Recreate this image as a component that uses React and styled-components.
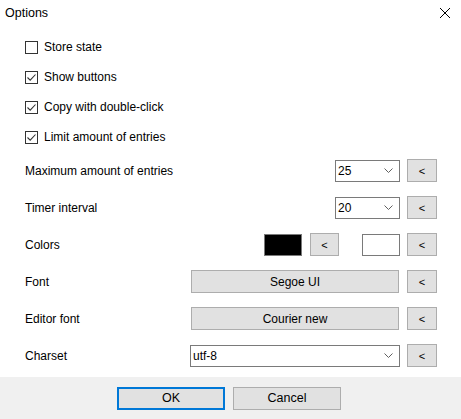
import React from 'react';
import styled, { createGlobalStyle } from 'styled-components';

const GlobalStyle = createGlobalStyle`
  html, body {
    margin: 0;
    padding: 0;
    background: #ffffff;
  }
  body {
    font-family: "Liberation Sans", Arial, sans-serif;
    font-size: 12px;
    color: #000;
  }
`

const Dialog = styled.div`
  width: 461px;
  height: 419px;
  display: flex;
  flex-direction: column;
  background: #ffffff;
  overflow: hidden;
`
const TitleBar = styled.div`
  height: 26px;
  display: flex;
  align-items: center;
  justify-content: space-between;
  padding: 0 11px 0 5px;
  font-size: 12.5px;
`
const CloseButton = styled.div`
  width: 10px;
  height: 10px;
  display: flex;
`
const Content = styled.div`
  flex: 1;
  display: flex;
  flex-direction: column;
  padding: 6px 24px 0 25px;
`
const CheckRow = styled.label`
  height: 30px;
  display: flex;
  align-items: center;
  gap: 6px;
`
const Box = styled.span`
  width: 11px;
  height: 11px;
  border: 1px solid #333;
  background: #fff;
  display: flex;
  align-items: center;
  justify-content: center;
`
const FieldRow = styled.div`
  height: 37px;
  display: flex;
  align-items: center;
  justify-content: space-between;
`
const Controls = styled.div`
  display: flex;
  align-items: center;
  gap: ${props => props.gap || '7px'};
`
const Select = styled.div`
  box-sizing: border-box;
  width: ${props => props.width};
  height: 22px;
  border: 1px solid #7a7a7a;
  background: #fff;
  display: flex;
  align-items: center;
  justify-content: space-between;
  padding: 0 6px 0 2px;
`
const Button = styled.div`
  box-sizing: border-box;
  width: ${props => props.width || '30px'};
  height: 23px;
  background: #e1e1e1;
  border: 1px solid #adadad;
  display: flex;
  align-items: center;
  justify-content: center;
  font-size: ${props => props.small ? '11px' : '12px'};
`
const Swatch = styled.div`
  box-sizing: border-box;
  width: 38px;
  height: 22px;
  border: 1px solid #7a7a7a;
  background: ${props => props.color};
`
const Footer = styled.div`
  height: 42px;
  background: #f0f0f0;
  display: flex;
  align-items: center;
  justify-content: center;
  gap: 8px;
  padding-right: 3px;
`
const DialogButton = styled.div`
  box-sizing: border-box;
  width: 108px;
  height: 23px;
  background: #e1e1e1;
  border: ${props => props.primary ? '2px solid #0078d7' : '1px solid #adadad'};
  display: flex;
  align-items: center;
  justify-content: center;
  font-size: 12.5px;
`

const Chevron = () => (
  <svg width="9" height="5" viewBox="0 0 9 5">
    <path d="M0.5 0.5 L4.5 4.5 L8.5 0.5" fill="none" stroke="#606060" strokeWidth="1" />
  </svg>
)

const Check = () => (
  <svg width="11" height="11" viewBox="0 0 11 11">
    <path d="M1.5 5.5 L4.2 8.2 L9.5 2.5" fill="none" stroke="#333" strokeWidth="1.1" />
  </svg>
)

const Checkbox = ({ checked, children }) => (
  <CheckRow>
    <Box>{checked && <Check />}</Box>
    {children}
  </CheckRow>
)

const Back = () => <Button small>&lt;</Button>

const App = () => {
  return (
    <Dialog>
      <GlobalStyle />
      <TitleBar>
        <span>Options</span>
        <CloseButton>
          <svg width="10" height="10" viewBox="0 0 10 10">
            <path d="M0 0 L10 10 M10 0 L0 10" stroke="#000" strokeWidth="1" />
          </svg>
        </CloseButton>
      </TitleBar>
      <Content>
        <Checkbox>Store state</Checkbox>
        <Checkbox checked>Show buttons</Checkbox>
        <Checkbox checked>Copy with double-click</Checkbox>
        <Checkbox checked>Limit amount of entries</Checkbox>
        <FieldRow>
          <span>Maximum amount of entries</span>
          <Controls>
            <Select width="65px"><span>25</span><Chevron /></Select>
            <Back />
          </Controls>
        </FieldRow>
        <FieldRow>
          <span>Timer interval</span>
          <Controls>
            <Select width="65px"><span>20</span><Chevron /></Select>
            <Back />
          </Controls>
        </FieldRow>
        <FieldRow>
          <span>Colors</span>
          <Controls gap="23px">
            <Controls gap="8px">
              <Swatch color="#000" />
              <Button small width="29px">&lt;</Button>
            </Controls>
            <Controls>
              <Swatch color="#fff" />
              <Back />
            </Controls>
          </Controls>
        </FieldRow>
        <FieldRow>
          <span>Font</span>
          <Controls gap="8px">
            <Button width="208px">Segoe UI</Button>
            <Back />
          </Controls>
        </FieldRow>
        <FieldRow>
          <span>Editor font</span>
          <Controls gap="8px">
            <Button width="208px">Courier new</Button>
            <Back />
          </Controls>
        </FieldRow>
        <FieldRow>
          <span>Charset</span>
          <Controls>
            <Select width="210px"><span>utf-8</span><Chevron /></Select>
            <Back />
          </Controls>
        </FieldRow>
      </Content>
      <Footer>
        <DialogButton primary>OK</DialogButton>
        <DialogButton>Cancel</DialogButton>
      </Footer>
    </Dialog>
  )
}

export default App
